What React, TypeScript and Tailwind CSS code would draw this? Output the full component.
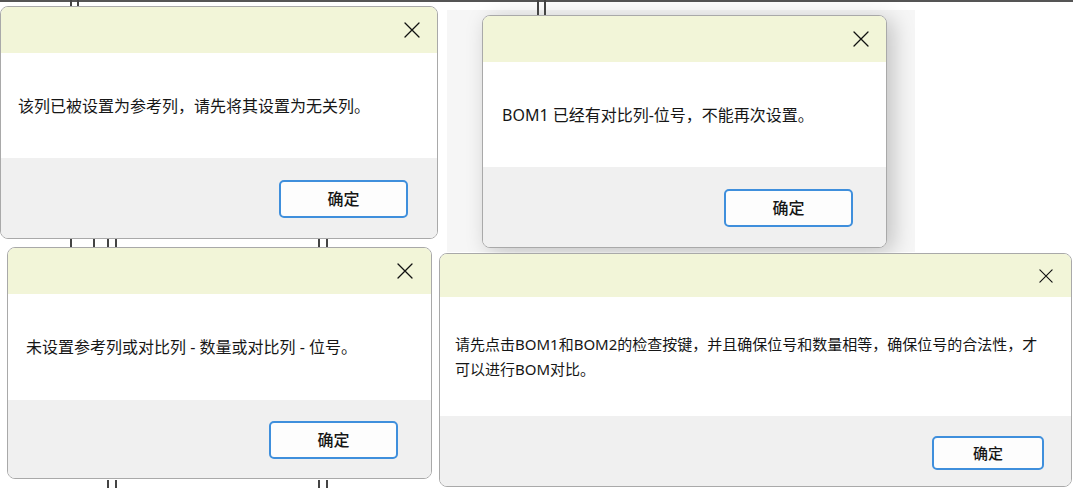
import type { ReactNode } from "react";

const font = "font-['Noto_Sans','Noto_Sans_CJK_SC',sans-serif]";

function CloseIcon({ size }: { size: number }) {
  return (
    <svg width={size} height={size} viewBox="0 0 16 16" fill="none">
      <path d="M1 1L15 15M15 1L1 15" stroke="#111" strokeWidth="1.3" strokeLinecap="round" />
    </svg>
  );
}

interface DialogProps {
  boxCls: string;
  titleCls: string;
  footerCls: string;
  bodyCls: string;
  btnCls: string;
  closeSize: number;
  children: ReactNode;
}

function Dialog({ boxCls, titleCls, footerCls, bodyCls, btnCls, closeSize, children }: DialogProps) {
  return (
    <div className={`flex shrink-0 flex-col overflow-hidden rounded-[8px] border border-[#a9a9a9] bg-white ${boxCls}`}>
      <div className={`flex shrink-0 items-center justify-end bg-[#f2f5d8] ${titleCls}`}>
        <CloseIcon size={closeSize} />
      </div>
      <div className={`flex flex-1 items-center bg-white text-[#161616] ${bodyCls}`}>{children}</div>
      <div className={`flex shrink-0 items-end justify-end bg-[#f0f0f0] ${footerCls}`}>
        <button
          type="button"
          className={`flex items-center justify-center rounded-[5px] border-2 border-[#3f8fdc] bg-[#fdfdfd] font-medium text-[#161616] ${btnCls}`}
        >
          确定
        </button>
      </div>
    </div>
  );
}

function Tick({ cls }: { cls: string }) {
  return <span className={`absolute w-[2px] bg-[#444] ${cls}`} />;
}

export default function App() {
  return (
    <div className={`relative h-[499px] w-[1073px] overflow-hidden bg-white ${font}`}>
      <div className="absolute left-0 top-0 h-[2px] w-[1073px] bg-[#555]" />
      <Tick cls="left-[70px] top-0 h-[6px]" />
      <Tick cls="left-[77px] top-0 h-[6px]" />
      <Tick cls="left-[70px] top-[239px] h-[8px]" />
      <Tick cls="left-[93px] top-[239px] h-[8px]" />
      <Tick cls="left-[107px] top-[239px] h-[8px]" />
      <Tick cls="left-[115px] top-[239px] h-[8px]" />
      <Tick cls="left-[318px] top-[239px] h-[8px]" />
      <Tick cls="left-[326px] top-[239px] h-[8px]" />
      <Tick cls="left-[107px] top-[480px] h-[8px]" />
      <Tick cls="left-[115px] top-[480px] h-[8px]" />
      <Tick cls="left-[318px] top-[480px] h-[8px]" />
      <Tick cls="left-[326px] top-[480px] h-[8px]" />

      <div className="flex h-[240px] items-start">
        <div className="h-[240px] w-[442px] shrink-0 pt-[6px]">
          <Dialog
            boxCls="h-[233px] w-[438px]"
            titleCls="h-[46px] pr-[17px]"
            bodyCls="pl-[17px] text-[16px]"
            footerCls="h-[80px] pr-[29px] pb-[20px]"
            btnCls="h-[38px] w-[129px] text-[16px]"
            closeSize={16}
          >
            该列已被设置为参考列，请先将其设置为无关列。
          </Dialog>
        </div>
        <div className="relative z-0 ml-[5px] mt-[10px] h-[242px] w-[468px] shrink-0 bg-[#f6f6f6] pl-[35px] pt-[5px]">
          <Tick cls="left-[90px] -top-[10px] h-[15px]" />
          <Tick cls="left-[97px] -top-[10px] h-[15px]" />
          <Dialog
            boxCls="h-[233px] w-[405px] shadow-[6px_4px_22px_rgba(0,0,0,0.22)]"
            titleCls="h-[46px] pr-[17px]"
            bodyCls="pl-[19px] text-[16px]"
            footerCls="h-[80px] pr-[33px] pb-[20px]"
            btnCls="h-[38px] w-[129px] text-[16px]"
            closeSize={16}
          >
            BOM1 已经有对比列-位号，不能再次设置。
          </Dialog>
        </div>
      </div>

      <div className="flex items-start">
        <div className="h-[248px] w-[437px] shrink-0 pl-[7px] pt-[7px]">
          <Dialog
            boxCls="h-[232px] w-[425px]"
            titleCls="h-[46px] pr-[18px]"
            bodyCls="pl-[18px] text-[16px]"
            footerCls="h-[78px] pr-[33px] pb-[19px]"
            btnCls="h-[38px] w-[129px] text-[16px]"
            closeSize={16}
          >
            未设置参考列或对比列 - 数量或对比列 - 位号。
          </Dialog>
        </div>
        <div className="relative z-10 pl-[2px] pt-[13px]">
          <Dialog
            boxCls="h-[234px] w-[633px]"
            titleCls="h-[43px] pr-[18px]"
            bodyCls="pl-[15px] pr-[30px] text-[15px] leading-[25px]"
            footerCls="h-[70px] pr-[27px] pb-[16px]"
            btnCls="h-[34px] w-[112px] text-[15px]"
            closeSize={14}
          >
            请先点击BOM1和BOM2的检查按键，并且确保位号和数量相等，确保位号的合法性，才可以进行BOM对比。
          </Dialog>
        </div>
      </div>
    </div>
  );
}
